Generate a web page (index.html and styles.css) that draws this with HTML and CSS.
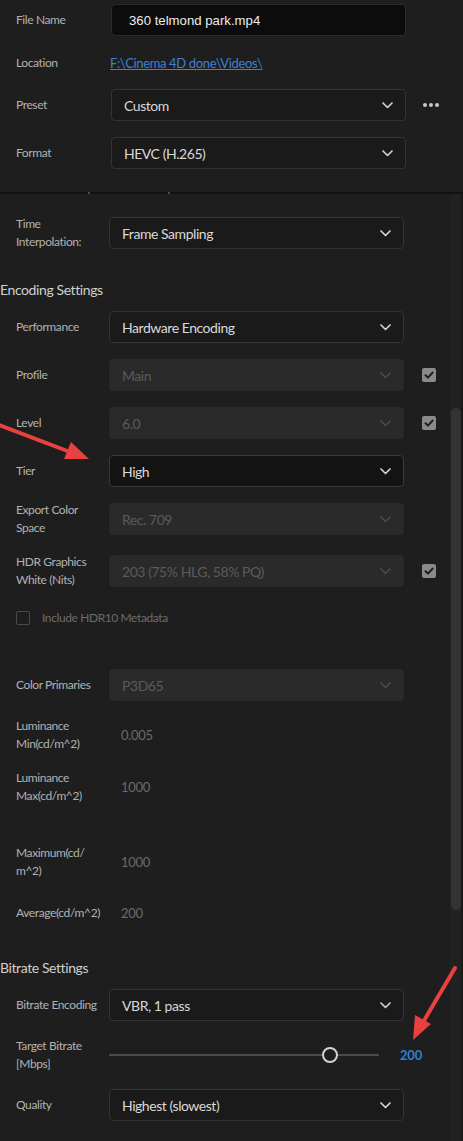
FILE: index.html
```html
<!DOCTYPE html>
<html>
<head>
<meta charset="utf-8">
<link rel="stylesheet" href="styles.css">
</head>
<body>
<div class="panel">
  <section class="top">
    <div class="row">
      <div class="label">File Name</div>
      <div class="textbox">360 telmond park.mp4</div>
    </div>
    <div class="row row-short">
      <div class="label">Location</div>
      <a class="link">F:\Cinema 4D done\Videos\</a>
    </div>
    <div class="row">
      <div class="label">Preset</div>
      <div class="select"><span>Custom</span><svg class="chev" viewBox="0 0 11 7"><path d="M1 1 L5.5 5.5 L10 1"/></svg></div>
      <div class="more"><i></i><i></i><i></i></div>
    </div>
    <div class="row">
      <div class="label">Format</div>
      <div class="select"><span>HEVC (H.265)</span><svg class="chev" viewBox="0 0 11 7"><path d="M1 1 L5.5 5.5 L10 1"/></svg></div>
    </div>
  </section>
  <div class="divider"><i class="tick t1"></i><i class="tick t2"></i></div>
  <section class="main">
    <div class="row">
      <div class="label">Time<br>Interpolation:</div>
      <div class="select"><span>Frame Sampling</span><svg class="chev" viewBox="0 0 11 7"><path d="M1 1 L5.5 5.5 L10 1"/></svg></div>
    </div>

    <h2 class="heading sp-heading">Encoding Settings</h2>

    <div class="row sp-after-heading">
      <div class="label">Performance</div>
      <div class="select"><span>Hardware Encoding</span><svg class="chev" viewBox="0 0 11 7"><path d="M1 1 L5.5 5.5 L10 1"/></svg></div>
    </div>
    <div class="row">
      <div class="label">Profile</div>
      <div class="select disabled"><span>Main</span><svg class="chev" viewBox="0 0 11 7"><path d="M1 1 L5.5 5.5 L10 1"/></svg></div>
      <div class="check"><svg viewBox="0 0 14 14"><path d="M3.5 7.2 L6 9.6 L10.6 4.6"/></svg></div>
    </div>
    <div class="row">
      <div class="label">Level</div>
      <div class="select disabled"><span>6.0</span><svg class="chev" viewBox="0 0 11 7"><path d="M1 1 L5.5 5.5 L10 1"/></svg></div>
      <div class="check"><svg viewBox="0 0 14 14"><path d="M3.5 7.2 L6 9.6 L10.6 4.6"/></svg></div>
    </div>
    <div class="row">
      <div class="label">Tier</div>
      <div class="select dark"><span>High</span><svg class="chev" viewBox="0 0 11 7"><path d="M1 1 L5.5 5.5 L10 1"/></svg></div>
    </div>
    <div class="row">
      <div class="label">Export Color<br>Space</div>
      <div class="select disabled"><span>Rec. 709</span><svg class="chev" viewBox="0 0 11 7"><path d="M1 1 L5.5 5.5 L10 1"/></svg></div>
    </div>
    <div class="row sp-4">
      <div class="label">HDR Graphics<br>White (Nits)</div>
      <div class="select disabled"><span>203 (75% HLG, 58% PQ)</span><svg class="chev" viewBox="0 0 11 7"><path d="M1 1 L5.5 5.5 L10 1"/></svg></div>
      <div class="check"><svg viewBox="0 0 14 14"><path d="M3.5 7.2 L6 9.6 L10.6 4.6"/></svg></div>
    </div>
    <div class="row row-short sp-4">
      <div class="box"></div>
      <div class="box-label">Include HDR10 Metadata</div>
    </div>

    <div class="row sp-25">
      <div class="label">Color Primaries</div>
      <div class="select disabled"><span>P3D65</span><svg class="chev" viewBox="0 0 11 7"><path d="M1 1 L5.5 5.5 L10 1"/></svg></div>
    </div>
    <div class="row row-tall">
      <div class="label">Luminance<br>Min(cd/m^2)</div>
      <div class="value">0.005</div>
    </div>
    <div class="row row-tall">
      <div class="label">Luminance<br>Max(cd/m^2)</div>
      <div class="value">1000</div>
    </div>
    <div class="row row-tall sp-23">
      <div class="label">Maximum(cd/<br>m^2)</div>
      <div class="value">1000</div>
    </div>
    <div class="row row-short sp-6">
      <div class="label">Average(cd/m^2)</div>
      <div class="value">200</div>
    </div>

    <h2 class="heading sp-19">Bitrate Settings</h2>

    <div class="row sp-after-heading">
      <div class="label">Bitrate Encoding</div>
      <div class="select"><span>VBR, 1 pass</span><svg class="chev" viewBox="0 0 11 7"><path d="M1 1 L5.5 5.5 L10 1"/></svg></div>
    </div>
    <div class="row row-tall">
      <div class="label">Target Bitrate<br>[Mbps]</div>
      <div class="slider"><div class="track"></div><div class="thumb"></div></div>
      <div class="slider-value">200</div>
    </div>
    <div class="row">
      <div class="label">Quality</div>
      <div class="select"><span>Highest (slowest)</span><svg class="chev" viewBox="0 0 11 7"><path d="M1 1 L5.5 5.5 L10 1"/></svg></div>
    </div>

    <div class="scrolltrack"><div class="scrollthumb"></div></div>
  </section>

  <svg class="arrows" viewBox="0 0 463 1141" width="463" height="1141">
    <line x1="-6" y1="423" x2="70" y2="452" />
    <polygon points="89,459 64,459 71,442" />
    <line x1="455" y1="968" x2="422" y2="1024" />
    <polygon points="413,1040 415,1015 431,1024" />
  </svg>
</div>
</body>
</html>
```

FILE: styles.css
```css
* { box-sizing: border-box; }

html, body {
  margin: 0;
  padding: 0;
  background: #1e1e1e;
}

body {
  width: 463px;
  height: 1141px;
  overflow: hidden;
  font-family: Lato, "Open Sans", sans-serif;
  color: #b4b4b4;
}

.panel {
  position: relative;
  width: 463px;
  height: 1141px;
  background: #1e1e1e;
  overflow: hidden;
}

.top {
  display: flex;
  flex-direction: column;
  gap: 16px;
  padding: 4px 0 23px 16px;
}

.top .label { width: 95px; }

.main {
  position: relative;
  display: flex;
  flex-direction: column;
  gap: 16px;
  padding: 23px 0 0 16px;
  height: 947px;
}

.main .label { width: 93px; }

.row {
  display: flex;
  align-items: center;
  height: 32px;
}

.row-short { height: 21px; }
.row-tall { height: 36px; }

.label {
  flex: none;
  font-size: 12px;
  letter-spacing: -0.4px;
  line-height: 18px;
  color: #b2b2b2;
}

.textbox {
  width: 295px;
  height: 32px;
  background: #0c0c0c;
  border: 1px solid #2c2c2c;
  border-radius: 4px;
  padding-left: 17px;
  display: flex;
  align-items: center;
  font-family: "Liberation Sans", Arial, sans-serif;
  font-size: 13.2px;
  color: #ececec;
}

.link {
  font-size: 13px;
  letter-spacing: -0.35px;
  color: #3d80d6;
  text-decoration: underline;
  margin-left: -1px;
}

.select {
  flex: none;
  width: 295px;
  height: 32px;
  background: #1a1a1a;
  border: 1px solid #343434;
  border-radius: 4px;
  display: flex;
  align-items: center;
  justify-content: space-between;
  padding: 0 12px 0 12px;
  font-size: 14px;
  letter-spacing: -0.45px;
  color: #d9d9d9;
}

.select.dark {
  background: #131313;
  border-color: #3a3a3a;
}

.select.disabled {
  background: #2a2a2a;
  border-color: #2a2a2a;
  color: #5b5b5b;
}

.chev {
  width: 11px;
  height: 7px;
  fill: none;
  stroke: #d0d0d0;
  stroke-width: 1.7;
  stroke-linecap: round;
  stroke-linejoin: round;
}

.disabled .chev { stroke: #4a4a4a; }

.more {
  display: flex;
  gap: 2px;
  margin-left: 17px;
}

.more i {
  width: 4px;
  height: 4px;
  border-radius: 50%;
  background: #c8c8c8;
}

.divider {
  position: relative;
  height: 2px;
  background: #121212;
}

.tick {
  position: absolute;
  top: 0;
  width: 2px;
  height: 2px;
  background: #4a4a4a;
}

.t1 { left: 88px; }
.t2 { left: 168px; }

.heading {
  margin: 0 0 0 -16px;
  height: 20px;
  line-height: 20px;
  font-size: 14px;
  font-weight: normal;
  letter-spacing: -0.4px;
  color: #cfcfcf;
}

.sp-heading { margin-top: 15px; }
.sp-after-heading { margin-top: -5px; }
.sp-4 { margin-top: 4px; }
.sp-6 { margin-top: 6px; }
.sp-19 { margin-top: 19px; }
.sp-23 { margin-top: 23px; }
.sp-25 { margin-top: 25px; }

.check {
  margin-left: 18px;
  width: 14px;
  height: 14px;
  border-radius: 2px;
  background: #8a8a8a;
}

.check svg {
  display: block;
  width: 14px;
  height: 14px;
  fill: none;
  stroke: #1c1c1c;
  stroke-width: 2;
  stroke-linecap: round;
  stroke-linejoin: round;
}

.box {
  width: 14px;
  height: 14px;
  border: 1.5px solid #4a4a4a;
  border-radius: 2px;
}

.box-label {
  margin-left: 12px;
  font-size: 12px;
  letter-spacing: -0.4px;
  color: #6c6c6c;
}

.value {
  padding-left: 12px;
  font-size: 13px;
  letter-spacing: -0.3px;
  color: #6a6a6a;
}

.slider {
  position: relative;
  width: 270px;
  height: 16px;
  display: flex;
  align-items: center;
}

.track {
  width: 100%;
  height: 2px;
  background: #4b4b4b;
}

.thumb {
  position: absolute;
  left: 213px;
  top: 0;
  width: 16px;
  height: 16px;
  border-radius: 50%;
  border: 2px solid #d2d2d2;
  background: #1e1e1e;
}

.slider-value {
  margin-left: 21px;
  font-size: 13px;
  font-weight: bold;
  letter-spacing: -0.2px;
  color: #2f7fd6;
}

.scrolltrack {
  position: absolute;
  right: 0;
  top: 0;
  width: 13px;
  height: 100%;
  background: #212121;
  border-right: 2px solid #181818;
}

.scrollthumb {
  position: absolute;
  left: 1px;
  top: 214px;
  width: 10px;
  height: 502px;
  border-radius: 5px;
  background: #333333;
}

.arrows {
  position: absolute;
  left: 0;
  top: 0;
  pointer-events: none;
}

.arrows line {
  stroke: #e8413f;
  stroke-width: 4;
  stroke-linecap: round;
}

.arrows polygon {
  fill: #e8413f;
}
```
